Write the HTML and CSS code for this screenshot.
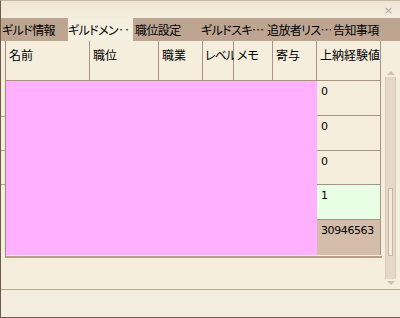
FILE: index.html
```html
<!DOCTYPE html>
<html>
<head>
<meta charset="utf-8">
<link rel="stylesheet" href="styles.css">
</head>
<body>
<div class="window">
  <div class="titlebar"><span class="close">×</span></div>
  <div class="tabs">
    <div class="tab">ギルド情報</div>
    <div class="tab active">ギルドメン‥</div>
    <div class="tab">職位設定</div>
    <div class="tab">ギルドスキ…</div>
    <div class="tab">追放者リス…</div>
    <div class="tab">告知事項</div>
  </div>
  <div class="content">
    <div class="gutter">
      <div class="tick"></div><div class="tick"></div><div class="tick"></div>
    </div>
    <div class="frame">
      <div class="grid">
        <div class="hcell">名前</div>
        <div class="hcell">職位</div>
        <div class="hcell">職業</div>
        <div class="hcell narrow">レベル</div>
        <div class="hcell">メモ</div>
        <div class="hcell">寄与</div>
        <div class="hcell">上納経験値</div>
        <div class="mask"></div>
        <div class="cell">0</div>
        <div class="cell">0</div>
        <div class="cell">0</div>
        <div class="cell green">1</div>
        <div class="cell tan">30946563</div>
      </div>
    </div>
    <div class="scrollbar">
      <div class="arrow up"></div>
      <div class="track"><div class="thumb"></div></div>
      <div class="arrow down"></div>
    </div>
  </div>
  <div class="footer"></div>
</div>
</body>
</html>
```
FILE: styles.css
```css
html, body {
  margin: 0;
  padding: 0;
}
body {
  width: 400px;
  height: 318px;
  overflow: hidden;
  font-family: "Noto Sans CJK JP", "DejaVu Sans", sans-serif;
  font-size: 12px;
  color: #000;
}
.window {
  width: 400px;
  height: 318px;
  box-sizing: border-box;
  background: #f5eedd;
  border-left: 1px solid #6d5a4c;
  border-bottom: 1px solid #6d5a4c;
  border-top: 1px solid #c8b6a4;
  display: flex;
  flex-direction: column;
}
.titlebar {
  height: 17px;
  display: flex;
  justify-content: flex-end;
  align-items: center;
  padding-right: 7px;
  background: linear-gradient(#efe6d4, #f5eedd);
}
.close {
  font-family: "DejaVu Sans", sans-serif;
  font-size: 11px;
  color: #a8a8a8;
  line-height: 1;
  margin-top: 1px;
}
.tabs {
  height: 23px;
  background: #bda592;
  display: flex;
  align-items: stretch;
  padding-left: 1px;
}
.tab {
  height: 23px;
  line-height: 23px;
  white-space: nowrap;
  overflow: hidden;
  width: 64px;
  margin-right: 2px;
  font-feature-settings: "palt";
  letter-spacing: -0.6px;
}
.tab.active {
  background: #f5efe0;
  width: 65px;
  margin-right: 2px;
}
.content {
  display: flex;
  height: 248px;
}
.gutter {
  width: 4px;
  display: flex;
  flex-direction: column;
  padding-top: 75px;
  gap: 33px;
}
.tick {
  height: 1px;
  background: #b9a896;
}
.frame {
  width: 377px;
  height: 217px;
  border-left: 1px solid #9e8878;
  border-bottom: 2px solid #b99e8c;
  box-sizing: border-box;
}
.grid {
  display: grid;
  grid-template-columns: 84px 69px 44px 31px 39px 44px 64px;
  grid-template-rows: 40px 35px 35px 34px 35px 35px;
}
.hcell {
  background: #f5eedd;
  border-right: 1px solid #a89482;
  border-bottom: 1px solid #a89482;
  padding: 6px 0 0 3px;
  line-height: 16px;
  white-space: nowrap;
  font-feature-settings: "palt";
}
.hcell.narrow {
  letter-spacing: -1px;
  padding-left: 2px;
}
.mask {
  grid-column: 1 / 7;
  grid-row: 2 / 7;
  background: #ffb0ff;
}
.cell {
  grid-column: 7;
  background: #f5eedd;
  border-right: 1px solid #a89482;
  border-bottom: 1px solid #a89482;
  padding: 3px 0 0 4px;
  line-height: 16px;
  font-family: "DejaVu Sans", sans-serif;
  font-size: 11px;
}
.cell.green { background: #e8ffe6; }
.cell.tan { background: #d5bdab; border-bottom: none; letter-spacing: -0.4px; }
.scrollbar {
  margin-left: 3px;
  margin-top: 28px;
  width: 11px;
  height: 218px;
  display: flex;
  flex-direction: column;
}
.arrow {
  height: 8px;
  display: flex;
  justify-content: center;
  align-items: center;
}
.arrow.up::before {
  content: "";
  border-left: 4px solid transparent;
  border-right: 4px solid transparent;
  border-bottom: 4px solid #cfc2b4;
}
.arrow.down::before {
  content: "";
  border-left: 4px solid transparent;
  border-right: 4px solid transparent;
  border-top: 4px solid #cfc2b4;
}
.track {
  flex: 1;
  background: #e6d8c8;
  border-left: 1px solid #d8c9b8;
  border-right: 1px solid #d8c9b8;
  display: flex;
  flex-direction: column;
  justify-content: flex-end;
}
.thumb {
  height: 66px;
  margin: 0 2px 23px 2px;
  background: #f3ecdc;
  border: 1px solid #c9b7a5;
}
.footer {
  flex: 1;
  border-top: 1px solid #b8a898;
  background: #f3ede0;
}
```
